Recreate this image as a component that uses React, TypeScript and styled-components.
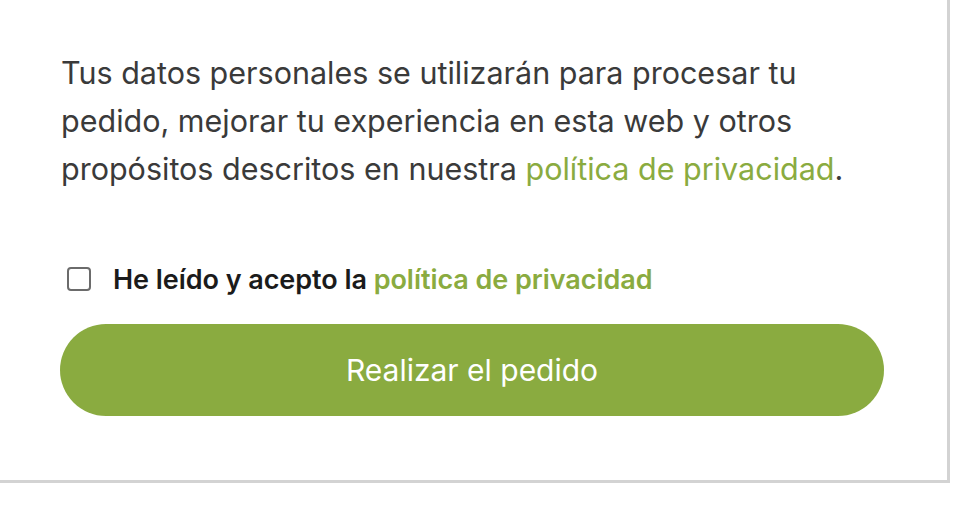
import React, { useState } from "react";
import styled, { createGlobalStyle } from "styled-components";

const GlobalStyle = createGlobalStyle`
	html, body {
		margin: 0;
		padding: 0;
		background: #ffffff;
	}
	body {
		font-family: Inter, "Liberation Sans", sans-serif;
	}
`;

const Panel = styled.div`
	width: 950px;
	box-sizing: border-box;
	padding: 49px 66px 64px 60px;
	background: #ffffff;
	border-right: 3px solid #d3d3d3;
	border-bottom: 3px solid #d3d3d3;
`;

const Notice = styled.p`
	margin: 0;
	padding-left: 1px;
	max-width: 800px;
	font-size: 30.5px;
	line-height: 48px;
	letter-spacing: 0;
	color: #3a3a3a;
`;

const Link = styled.a`
	color: #8aab40;
	text-decoration: none;
	cursor: pointer;
`;

const CheckRow = styled.label`
	display: flex;
	align-items: center;
	gap: 22px;
	margin-top: 68px;
	padding-left: 7px;
	height: 36px;
	font-size: 27px;
	font-weight: 600;
	letter-spacing: -0.05px;
	color: #1b1b1b;
	cursor: pointer;
`;

const Box = styled.span<{ checked: boolean }>`
	width: 20px;
	height: 20px;
	flex: none;
	border: 2px solid #6b6b6b;
	border-radius: 4px;
	background: ${(p) => (p.checked ? "#8aab40" : "#ffffff")};
`;

const HiddenInput = styled.input`
	display: none;
`;

const OrderButton = styled.button`
	display: block;
	width: 824px;
	height: 92px;
	margin-top: 27px;
	border: none;
	border-radius: 46px;
	background: #8aab40;
	color: #ffffff;
	font-family: Inter, "Liberation Sans", sans-serif;
	font-size: 30px;
	cursor: pointer;
`;

const App = () => {
	const [accepted, setAccepted] = useState(false);

	return (
		<>
			<GlobalStyle />
			<Panel>
				<Notice>
					Tus datos personales se utilizarán para procesar tu pedido, mejorar tu
					experiencia en esta web y otros propósitos descritos en nuestra{" "}
					<Link>política de privacidad</Link>.
				</Notice>
				<CheckRow>
					<HiddenInput
						type='checkbox'
						checked={accepted}
						onChange={() => setAccepted(!accepted)}
					/>
					<Box checked={accepted} />
					<span>
						He leído y acepto la <Link>política de privacidad</Link>
					</span>
				</CheckRow>
				<OrderButton>Realizar el pedido</OrderButton>
			</Panel>
		</>
	);
};

export default App;
